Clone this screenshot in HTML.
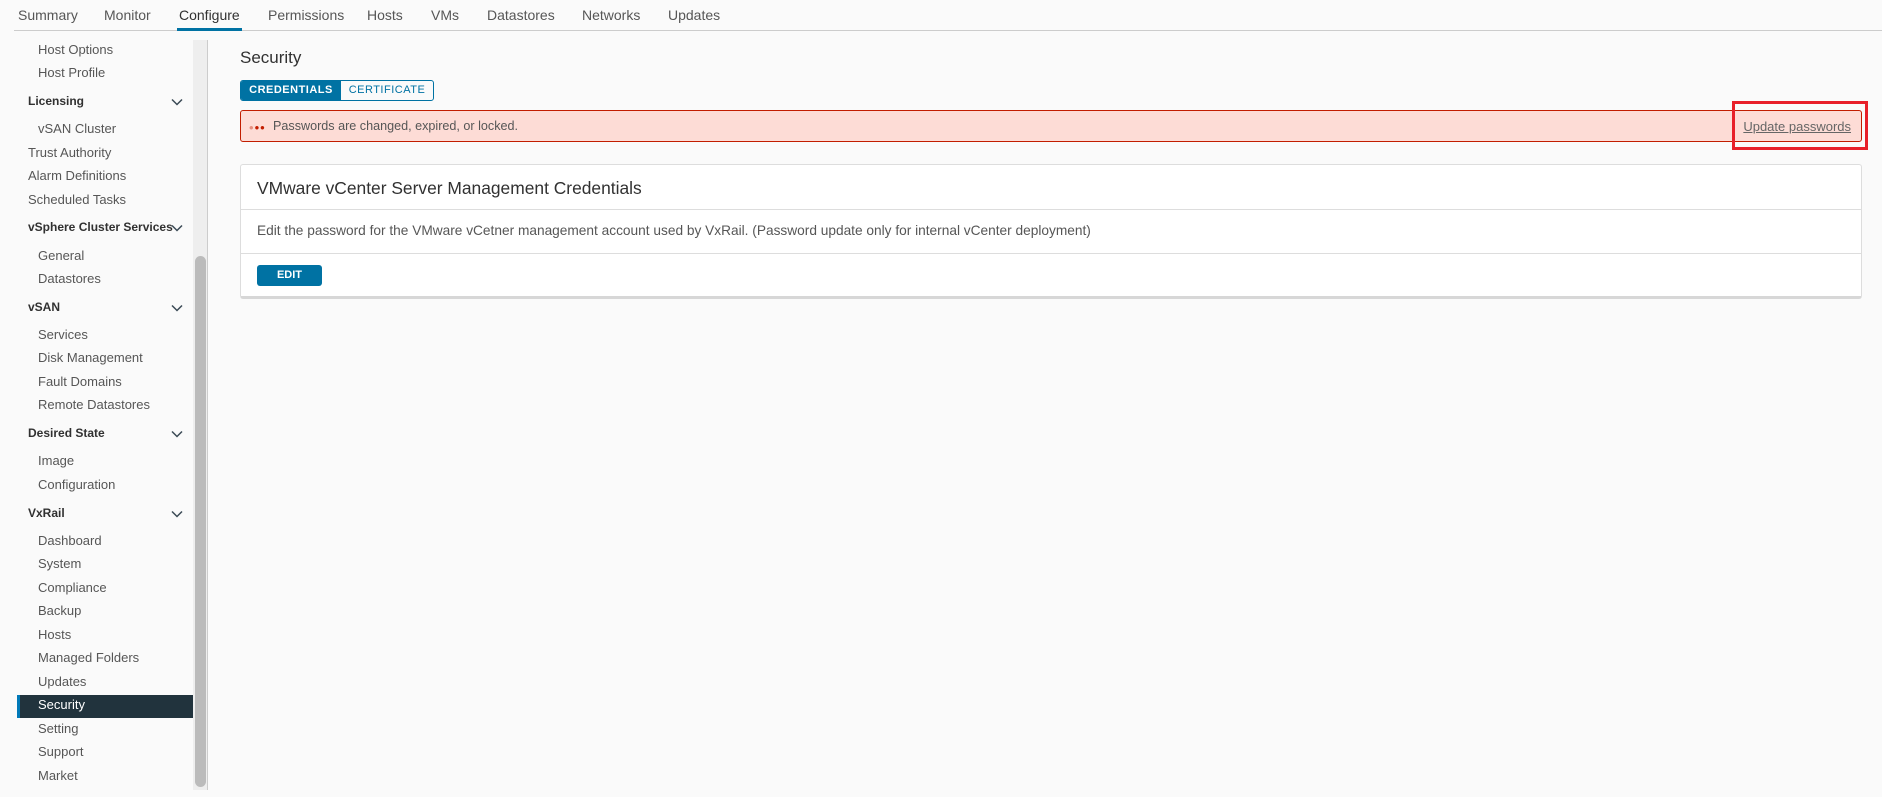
<!DOCTYPE html>
<html><head><meta charset="utf-8"><style>
*{box-sizing:border-box;margin:0;padding:0}
body{width:1882px;height:797px;background:#fafafa;font-family:"Liberation Sans",sans-serif;color:#565656;position:relative;overflow:hidden}
.tabs{position:absolute;left:0;top:0;width:1882px;height:31px}
.tabs .line{position:absolute;left:14px;right:0;top:30px;height:1px;background:#ccc}
.tab{position:absolute;top:7px;font-size:14px;color:#565656}
.tab.act{color:#313131}
.tab.act:after{content:"";position:absolute;left:-2px;right:-2px;top:21px;height:3px;background:#0072a3}
.side .it{position:absolute;font-size:13px;color:#565656;white-space:nowrap}
.side .c{left:38px}
.side .s{left:28px;font-weight:bold;color:#313131;font-size:12px}
.side .n{left:28px;font-size:13px}
.chev{position:absolute;left:171px;width:12px;height:8px}
.sel{position:absolute;left:17px;top:695px;width:176px;height:23px;background:#21333d;border-left:3px solid #0079b8}
.track{position:absolute;left:193px;top:40px;width:15px;height:750px;background:#eee;border-right:1px solid #ccc}
.thumb{position:absolute;left:195px;top:256px;width:11px;height:531px;background:#bbb;border-radius:6px}
</style></head><body>
<div class="tabs">
<div class="line"></div>
<span class="tab" style="left:18px">Summary</span>
<span class="tab" style="left:104px">Monitor</span>
<span class="tab act" style="left:179px">Configure</span>
<span class="tab" style="left:268px">Permissions</span>
<span class="tab" style="left:367px">Hosts</span>
<span class="tab" style="left:431px">VMs</span>
<span class="tab" style="left:487px">Datastores</span>
<span class="tab" style="left:582px">Networks</span>
<span class="tab" style="left:668px">Updates</span>
</div>
<div class="side">
<div class="sel"></div>
<span class="it c" style="top:42px">Host Options</span>
<span class="it c" style="top:65px">Host Profile</span>
<span class="it s" style="top:94px">Licensing</span>
<span class="it c" style="top:121px">vSAN Cluster</span>
<span class="it n" style="top:145px">Trust Authority</span>
<span class="it n" style="top:168px">Alarm Definitions</span>
<span class="it n" style="top:192px">Scheduled Tasks</span>
<span class="it s" style="top:220px">vSphere Cluster Services</span>
<span class="it c" style="top:248px">General</span>
<span class="it c" style="top:271px">Datastores</span>
<span class="it s" style="top:300px">vSAN</span>
<span class="it c" style="top:327px">Services</span>
<span class="it c" style="top:350px">Disk Management</span>
<span class="it c" style="top:374px">Fault Domains</span>
<span class="it c" style="top:397px">Remote Datastores</span>
<span class="it s" style="top:426px">Desired State</span>
<span class="it c" style="top:453px">Image</span>
<span class="it c" style="top:477px">Configuration</span>
<span class="it s" style="top:506px">VxRail</span>
<span class="it c" style="top:533px">Dashboard</span>
<span class="it c" style="top:556px">System</span>
<span class="it c" style="top:580px">Compliance</span>
<span class="it c" style="top:603px">Backup</span>
<span class="it c" style="top:627px">Hosts</span>
<span class="it c" style="top:650px">Managed Folders</span>
<span class="it c" style="top:674px">Updates</span>
<span class="it c" style="top:697px;color:#fff">Security</span>
<span class="it c" style="top:721px">Setting</span>
<span class="it c" style="top:744px">Support</span>
<span class="it c" style="top:768px">Market</span>
<svg class="chev" style="top:98px" viewBox="0 0 12 8"><path d="M1 1.5L6 6.5 11 1.5" fill="none" stroke="#3a4a55" stroke-width="1.5"/></svg>
<svg class="chev" style="top:224px" viewBox="0 0 12 8"><path d="M1 1.5L6 6.5 11 1.5" fill="none" stroke="#3a4a55" stroke-width="1.5"/></svg>
<svg class="chev" style="top:304px" viewBox="0 0 12 8"><path d="M1 1.5L6 6.5 11 1.5" fill="none" stroke="#3a4a55" stroke-width="1.5"/></svg>
<svg class="chev" style="top:430px" viewBox="0 0 12 8"><path d="M1 1.5L6 6.5 11 1.5" fill="none" stroke="#3a4a55" stroke-width="1.5"/></svg>
<svg class="chev" style="top:510px" viewBox="0 0 12 8"><path d="M1 1.5L6 6.5 11 1.5" fill="none" stroke="#3a4a55" stroke-width="1.5"/></svg>
</div>
<div class="track"></div><div class="thumb"></div>

<div style="position:absolute;left:240px;top:48px;font-size:17px;color:#313131">Security</div>
<div style="position:absolute;left:240px;top:80px;width:194px;height:21px;border:1px solid #0072a3;border-radius:3px;overflow:hidden;font-size:11px;font-weight:bold;letter-spacing:.5px">
<div style="position:absolute;left:0;top:0;width:100px;height:19px;background:#0072a3;color:#fff;text-align:center;line-height:19px">CREDENTIALS</div>
<div style="position:absolute;left:100px;top:0;width:92px;height:19px;color:#0072a3;text-align:center;line-height:19px;font-weight:normal">CERTIFICATE</div>
</div>
<div style="position:absolute;left:240px;top:110px;width:1622px;height:32px;background:#fddcd6;border:1px solid #c21d00;border-radius:3px">
<span style="position:absolute;left:8px;top:9px;font-size:13px;color:#c21d00;letter-spacing:1px"><span style="opacity:.4">•</span>••</span>
<span style="position:absolute;left:32px;top:8px;font-size:12.6px;color:#565656">Passwords are changed, expired, or locked.</span>
<span style="position:absolute;right:10px;top:8px;font-size:13px;color:#666;text-decoration:underline">Update passwords</span>
</div>
<div style="position:absolute;left:1732px;top:101px;width:136px;height:49px;border:3px solid #e8202a"></div>

<div style="position:absolute;left:240px;top:164px;width:1622px;height:135px;background:#fff;border:1px solid #ddd;border-bottom:3px solid #d7d7d7;border-radius:3px">
<div style="position:absolute;left:16px;top:13px;font-size:17.4px;color:#313131">VMware vCenter Server Management Credentials</div>
<div style="position:absolute;left:0;right:0;top:44px;height:1px;background:#ddd"></div>
<div style="position:absolute;left:16px;top:58px;font-size:13.7px;color:#565656">Edit the password for the VMware vCetner management account used by VxRail. (Password update only for internal vCenter deployment)</div>
<div style="position:absolute;left:0;right:0;top:88px;height:1px;background:#ddd"></div>
<div style="position:absolute;left:16px;top:100px;width:65px;height:21px;background:#0072a3;border-radius:3px;color:#fff;font-size:11px;font-weight:bold;text-align:center;line-height:21px">EDIT</div>
</div>
</body></html>
